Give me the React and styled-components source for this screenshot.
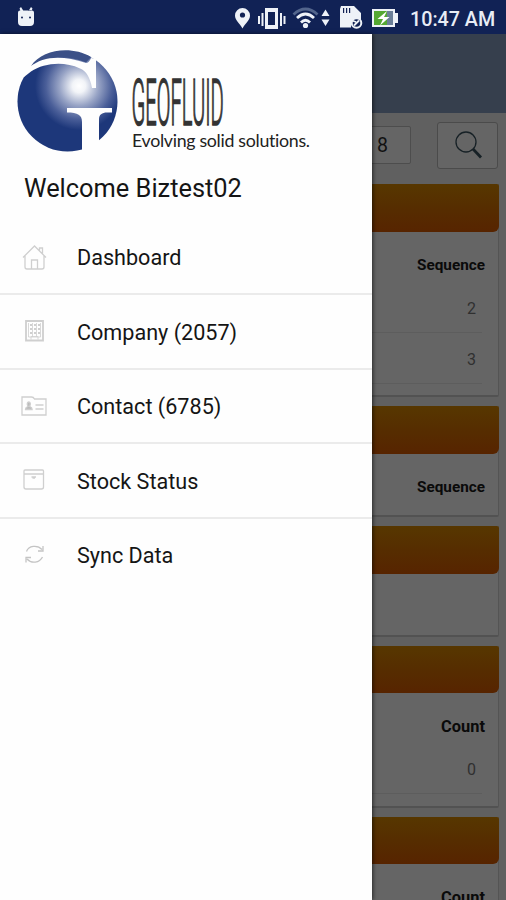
import React from "react";
import styled, { createGlobalStyle } from "styled-components";

const Global = createGlobalStyle`
  * { box-sizing: border-box; }
  body { margin: 0; overflow: hidden; font-family: Roboto, sans-serif; background: #606060; }
`;

const Screen = styled.div`
  position: relative;
  width: 506px;
  height: 900px;
  overflow: hidden;
  display: flex;
  flex-direction: column;
  background: #606060;
`;

const StatusBar = styled.header`
  flex: none;
  height: 34px;
  display: flex;
  align-items: center;
  background: #112255;
`;

const StatusIcons = styled.svg`
  display: block;
  flex: none;
`;

const Clock = styled.time`
  margin-left: 5px;
  padding-top: 4px;
  color: #e9edf5;
  font-size: 19.7px;
  font-weight: 500;
  white-space: nowrap;
`;

const TitleBar = styled.div`
  flex: none;
  height: 79px;
  background: #363f4d;
`;

const Toolbar = styled.div`
  flex: none;
  height: 71px;
  padding: 9px 8px 0 0;
  display: flex;
  justify-content: flex-end;
  align-items: flex-start;
  gap: 26px;
`;

const NumberBox = styled.div`
  width: 120px;
  height: 38px;
  margin-top: 4px;
  padding-right: 22px;
  border: 1px solid #4d4d4d;
  border-radius: 2px;
  background: #656565;
  color: #111;
  font-size: 19.5px;
  line-height: 38px;
  text-align: right;
`;

const SearchButton = styled.button`
  width: 61px;
  height: 47px;
  padding: 0 0 2px;
  display: grid;
  place-items: center;
  border: 1px solid #4b4b4b;
  border-radius: 3px;
  background: #656565;
`;

const Cards = styled.main`
  display: flex;
  flex-direction: column;
  gap: 9px;
  padding: 0 7px 0 8px;
`;

const Card = styled.section`
  flex: none;
  height: ${(p) => p.$height}px;
  border-right: 1px solid #545454;
  border-bottom: 2px solid #525252;
  border-radius: 0 0 2px 2px;
  background: #656565;
`;

const CardBar = styled.div`
  height: 47.5px;
  margin-right: -1px;
  border-radius: 2px 2px 6px 2px;
  background: linear-gradient(#573700, #562d00 50%, #572400);
`;

const ColumnTitle = styled.div`
  height: 50px;
  padding: 18px 13px 0 0;
  color: #0a0a0a;
  font-size: ${(p) => p.$size}px;
  font-weight: 700;
  line-height: 31px;
  text-align: right;
`;

const ValueRow = styled.div`
  height: 51px;
  margin-right: 16px;
  padding-right: 6px;
  border-bottom: 1px solid #5d5d5d;
  color: #303030;
  font-size: 16px;
  line-height: 53px;
  text-align: right;
`;

const Drawer = styled.aside`
  position: absolute;
  top: 34px;
  left: 0;
  width: 372px;
  height: 866px;
  background: #fefefe;
  box-shadow: 1px 0 4px rgba(0, 0, 0, 0.6);
`;

const Logo = styled.svg`
  display: block;
`;

const Tagline = styled.text`
  font-family: Lato, sans-serif;
  font-size: 17.8px;
  font-variant-ligatures: none;
  fill: #222;
`;

const Welcome = styled.h1`
  margin: 0;
  height: 55.5px;
  padding-left: 24px;
  color: #151515;
  font-size: 25.4px;
  font-weight: 400;
  line-height: 46px;
  white-space: nowrap;
`;

const Menu = styled.nav`
  display: flex;
  flex-direction: column;
`;

const MenuItem = styled.a`
  height: 74.5px;
  padding-left: 20px;
  display: flex;
  align-items: center;
  gap: 29px;
  border-bottom: 2px solid ${(p) => (p.$last ? "transparent" : "#ebebeb")};
  color: #151515;
  font-size: 21.6px;
  white-space: nowrap;
`;

const MenuLabel = styled.span`
  padding-top: 2px;
`;

const MenuIcon = styled.svg`
  flex: none;
  width: 28px;
  height: 28px;
  fill: none;
  stroke: #cfcfcf;
  stroke-width: 1.3;
`;

const icons = {
  home: (
    <path d="M3 14.5 14.5 3 26 14.5M5 13v11q0 2 2 2h4.5v-9h6v9H22q2 0 2-2V13M19.5 7.5V5h3v5.5M11.5 26h6" />
  ),
  company: (
    <>
      <path d="M6 4h17v19.500H6z" strokeWidth="1.8" />
      <path d="M10 8h10M10 12h10M10 16h10" strokeWidth="2" strokeDasharray="2 2" />
      <path d="M8.500 6v14h12V6M12.500 6v14M16.500 6v14M11 22.500v-3h7v3" strokeWidth="0.8" />
    </>
  ),
  contact: (
    <>
      <path d="M2 23V5h9.500q2 0 3 2h11.500v16z" />
      <path d="M15.500 13h8M15.500 17h8" strokeWidth="1.5" />
      <path
        d="M5.500 17.500c0-2.500 1.500-2.500 2.500-3-1.500-3-.5-4.500.8-4.500s2.300 1.500.8 4.500c1 .5 2.500.5 2.500 3z"
        fill="#bbb"
      />
    </>
  ),
  stock: (
    <>
      <path d="M4 7.500V5q0-1 1-1h17.500q1 0 1 1v16q0 2-2 2H6q-2 0-2-2zM4 8h19.500" />
      <path d="M11.500 11h4.500M12.500 12h2.500" />
    </>
  ),
  sync: (
    <path
      d="M6.500 10.500c2-6 11-7 15.500-2M23 5v5h-5M22.500 16c-3 6-11 7-15.500 2M6 21.500v-5h5"
      stroke="#c4c4c4"
    />
  ),
};

const items = [
  ["home", "Dashboard"],
  ["company", "Company (2057)"],
  ["contact", "Contact (6785)"],
  ["stock", "Stock Status"],
  ["sync", "Sync Data"],
];

const cards = [
  { title: "Sequence", size: 15.3, values: ["2", "3"], height: 213.4 },
  { title: "Sequence", size: 15.3, values: [], height: 110.8 },
  { title: null, values: [], height: 110.4 },
  { title: "Count", size: 16.4, values: ["0"], height: 162 },
  { title: "Count", size: 16.4, values: [], height: 162 },
];

function SystemIcons() {
  return (
    <StatusIcons width="405" height="34" viewBox="0 0 405 34">
      <g fill="#eef2f8">
        <path d="M18 12.500q0-2 2-2h12q2 0 2 2V22q0 4-4 4h-8q-4 0-4-4zM19.500 8.500l1.500-1.500 2.500 4h-3zM32.500 8.500 31 7l-2.500 4h3z" />
        <path d="M242.500 8a7.500 7.500 0 0 0-7.500 7.500c0 5 4.500 7.500 7.500 13 3-5.500 7.500-8 7.500-13a7.500 7.500 0 0 0-7.500-7.500z" />
        <path d="M265 8h13v21h-13zM258 16h2v8h-2zM261.500 13h2v13h-2zM280 13h2v13h-2zM283.500 16h2v8h-2z" />
        <path d="m325.500 9.500 4 6.500h-8zM325.500 26l4-6.500h-8z" />
        <path d="M341 6h13l7 7v8a7 7 0 0 0-10 6.500h-11V9z" />
        <path d="M372 9h23v4h3v10h-3v4h-23z" />
      </g>
      <g fill="#112255">
        <circle cx="22" cy="17.5" r="1" />
        <circle cx="30" cy="17.5" r="1" />
        <circle cx="242.5" cy="15" r="2.6" />
        <path d="M268 12h7v13h-7zM343 8h1.200v5H343zM346 8h1.200v5H346zM349 8h1.200v5H349z" />
      </g>
      <g fill="none" strokeWidth="2.8">
        <path d="M293.500 14.500q12-11 24 0" stroke="#53658c" />
        <path d="M297 18q8.500-8 17 0M301 22.500q4.500-4.500 9 0" stroke="#eef2f8" />
      </g>
      <circle cx="305.5" cy="25.5" r="2.6" fill="#eef2f8" />
      <circle cx="356.5" cy="23" r="4.8" fill="#112255" stroke="#eef2f8" strokeWidth="2" />
      <path d="m354 25.500 5-5M352 20.500l4 1.500" stroke="#eef2f8" strokeWidth="1.8" />
      <path d="M374 11h13v14h-13z" fill="#55a832" />
      <path d="M387 11h6v14h-6z" fill="#6b7f98" />
      <path d="m387 11-9.500 8h5.500l-3 6.500 9.500-8.500H384z" fill="#fff" />
    </StatusIcons>
  );
}

function BrandLogo() {
  return (
    <Logo width="372" height="131" viewBox="0 34 372 131">
      <defs>
        <radialGradient id="sphere" gradientUnits="userSpaceOnUse" cx="79" cy="86" r="44">
          <stop offset="0" stopColor="#fff" />
          <stop offset="0.15" stopColor="#f2f4f8" />
          <stop offset="0.45" stopColor="#97a3c5" />
          <stop offset="0.75" stopColor="#4b5f99" />
          <stop offset="1" stopColor="#1d377a" />
        </radialGradient>
      </defs>
      <circle cx="67.5" cy="101.5" r="50" fill="url(#sphere)" />
      <path d="M31 66C42 50 70 45 91 57l-5 5.500C66 54 45 57 31 66z" fill="#3b5087" />
      <path
        d="M30 67C43 56 62 55 86 63q3 0 5-5l5 1V88h-4C90 77 86 71 80 68.500 64 61 44 63 31 71.500L24 77V70z"
        fill="#fefefe"
      />
      <path
        d="M67 108h45v4.500h-5c-5 0-8 2-8 7V155H82v-33c0-7-4-9.500-15-9.500z"
        fill="#fefefe"
      />
      <text
        transform="translate(131.500 125) scale(.27 1)"
        fontFamily="Roboto, sans-serif"
        fontSize="65"
        fontWeight="300"
        fill="#333"
        stroke="#333"
        strokeWidth="1.6"
        textLength="342"
        lengthAdjust="spacingAndGlyphs"
      >
        GEOFLUID
      </text>
      <Tagline x="132" y="147" textLength="178">
        Evolving solid solutions.
      </Tagline>
    </Logo>
  );
}

export default function App() {
  return (
    <Screen>
      <Global />
      <StatusBar>
        <SystemIcons />
        <Clock>10:47 AM</Clock>
      </StatusBar>
      <TitleBar />
      <Toolbar>
        <NumberBox>8</NumberBox>
        <SearchButton aria-label="Search">
          <svg width="32" height="32" viewBox="0 0 32 32" fill="none" stroke="#172126">
            <circle cx="14" cy="13" r="10" strokeWidth="1.3" />
            <path d="m21 20 8 8.500" strokeWidth="2.8" />
          </svg>
        </SearchButton>
      </Toolbar>
      <Cards>
        {cards.map((card, i) => (
          <Card key={i} $height={card.height}>
            <CardBar />
            {card.title && <ColumnTitle $size={card.size}>{card.title}</ColumnTitle>}
            {card.values.map((value) => (
              <ValueRow key={value}>{value}</ValueRow>
            ))}
          </Card>
        ))}
      </Cards>
      <Drawer>
        <BrandLogo />
        <Welcome>Welcome Biztest02</Welcome>
        <Menu>
          {items.map(([icon, label], i) => (
            <MenuItem key={icon} $last={i === items.length - 1}>
              <MenuIcon viewBox="0 0 28 28">{icons[icon]}</MenuIcon>
              <MenuLabel>{label}</MenuLabel>
            </MenuItem>
          ))}
        </Menu>
      </Drawer>
    </Screen>
  );
}
